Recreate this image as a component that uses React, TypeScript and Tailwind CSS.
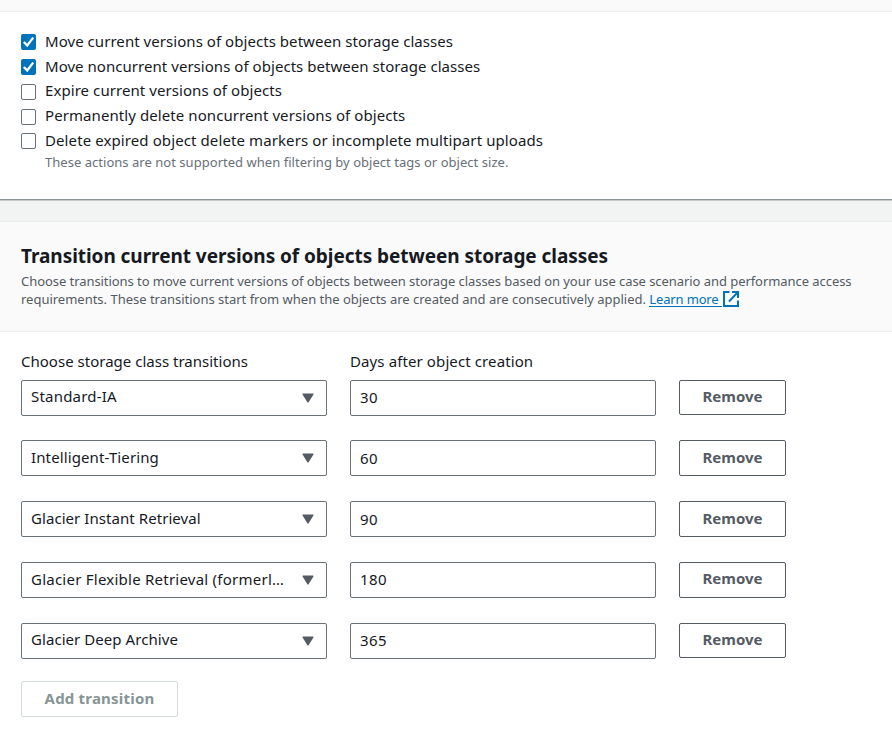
type Option = { label: string; checked: boolean; rowClass: string; boxClass: string; textClass: string };

const options: Option[] = [
  { label: "Move current versions of objects between storage classes", checked: true, rowClass: "h-[25px]", boxClass: "mt-[5px]", textClass: "tracking-[0.05px]" },
  { label: "Move noncurrent versions of objects between storage classes", checked: true, rowClass: "h-6", boxClass: "mt-[5px]", textClass: "tracking-[0.04px]" },
  { label: "Expire current versions of objects", checked: false, rowClass: "h-[25px]", boxClass: "mt-[6px]", textClass: "tracking-[0.07px]" },
  { label: "Permanently delete noncurrent versions of objects", checked: false, rowClass: "h-[25px]", boxClass: "mt-[6px]", textClass: "tracking-[0.08px]" },
  { label: "Delete expired object delete markers or incomplete multipart uploads", checked: false, rowClass: "h-[25px]", boxClass: "mt-[5px]", textClass: "tracking-[0.1px]" },
];

const transitions = [
  { storage: "Standard-IA", days: "30", rowClass: "h-[60px]", buttonClass: "h-[35px] pb-[2px]", selectClass: "pb-[3px] tracking-[0.2px]", daysClass: "pb-px" },
  { storage: "Intelligent-Tiering", days: "60", rowClass: "h-[61px]", buttonClass: "h-9 pb-[2px]", selectClass: "pb-px tracking-[0.12px]", daysClass: "pt-px" },
  { storage: "Glacier Instant Retrieval", days: "90", rowClass: "h-[61px]", buttonClass: "h-9 pb-[2px]", selectClass: "pb-px tracking-[0.06px]", daysClass: "pt-px" },
  { storage: "Glacier Flexible Retrieval (formerl…", days: "180", rowClass: "h-[61px]", buttonClass: "h-9 pb-[3px]", selectClass: "pb-px tracking-[0.24px]", daysClass: "pb-px" },
  { storage: "Glacier Deep Archive", days: "365", rowClass: "h-[58px]", buttonClass: "h-[35px] pb-[2px]", selectClass: "pb-[3px] tracking-[0.06px]", daysClass: "pb-px" },
];

function Checkbox({ checked, className }: { checked: boolean; className: string }) {
  return checked ? (
    <span className={`h-4 w-[15px] shrink-0 rounded-[2px] bg-[#0073bb] ${className}`}>
      <svg viewBox="0 0 15 16" className="block h-4 w-[15px]" fill="none" stroke="#fff" strokeWidth="2.3">
        <path d="M2.8 8 L6.2 11.4 L12.2 3.600" />
      </svg>
    </span>
  ) : (
    <span className={`h-4 w-[15px] shrink-0 rounded-[2px] border border-[#687078] bg-white ${className}`} />
  );
}

function ExternalIcon() {
  return (
    <svg viewBox="0 0 16 16" className="ml-px inline-block size-4 align-[-3px]" fill="none" stroke="#0073bb" strokeWidth="2">
      <path d="M6.500 1H1v14h14V9.500M9 1h6v6M15 1L6 10.500" />
    </svg>
  );
}

export default function App() {
  return (
    <div className="h-[732px] w-[892px] overflow-hidden bg-white font-['Noto_Sans',sans-serif] text-[15px] text-[#16191f]">
      <div className="h-3 border-b border-[#eaeded] bg-[#fafafa]" />
      <section className="h-[189px] border-b border-[#c5caca] pt-[17px]">
        <div className="h-full border-b border-[#879596] pl-[21px]">
          {options.map((o) => (
            <div key={o.label} className={`flex items-start gap-[9px] ${o.rowClass}`}>
              <Checkbox checked={o.checked} className={o.boxClass} />
              <span className={`text-[15px] leading-[25px] whitespace-nowrap ${o.textClass}`}>{o.label}</span>
            </div>
          ))}
          <p className="pl-6 text-[13px] leading-[18px] tracking-[0.03px] text-[#687078]">
            These actions are not supported when filtering by object tags or object size.
          </p>
        </div>
      </section>
      <div className="h-5 bg-[#f2f3f3]" />

      <header className="h-[111px] border-y border-[#eaeded] bg-[#fafafa] pt-[20px] pl-[21px] whitespace-nowrap">
        <h2 className="text-[19px] leading-[28px] font-bold tracking-[-0.05px]">
          Transition current versions of objects between storage classes
        </h2>
        <p className="mt-[2px] text-[13px] leading-[18px] tracking-[-0.06px] text-[#545b64]">
          Choose transitions to move current versions of objects between storage classes based on your use case scenario and performance access
          <br />
          <span className="tracking-[-0.01px]">
            requirements. These transitions start from when the objects are created and are consecutively applied.{" "}
          </span>
          <a className="text-[#0073bb]">
            <span className="inline-block h-[17px] border-b border-[#0073bb] pr-[3px] align-top tracking-[-0.15px]">Learn more</span>
            <ExternalIcon />
          </a>
        </p>
      </header>

      <main className="pt-[17px] pl-[21px] whitespace-nowrap">
        <div className="flex h-[31px] gap-[23px] leading-[25px]">
          <span className="w-[306px] tracking-[0.01px]">Choose storage class transitions</span>
          <span className="w-[306px] tracking-[0.11px]">Days after object creation</span>
        </div>
        {transitions.map((t) => (
          <div key={t.days} className={`flex items-start gap-[23px] ${t.rowClass}`}>
            <div className="flex h-9 w-[306px] items-center justify-between rounded-[2px] border border-[#687078] pr-3 pl-[9px]">
              <span className={t.selectClass}>{t.storage}</span>
              <svg viewBox="0 0 12 10" className="h-[10px] w-3 shrink-0" fill="#545b64">
                <path d="M1 0.5h10q.9 0 .4.9L6.8 9q-.8 1-1.6 0L.6 1.400Q.1.500 1 .5z" />
              </svg>
            </div>
            <div className="flex h-9 w-[306px] items-center rounded-[2px] border border-[#687078] pl-[9px]">
              <span className={`tracking-[0.4px] ${t.daysClass}`}>{t.days}</span>
            </div>
            <button className={`w-[107px] rounded-[2px] border border-[#545b64] font-bold text-[#545b64] ${t.buttonClass}`}>
              Remove
            </button>
          </div>
        ))}
        <button className="h-9 w-[157px] rounded-[2px] border border-[#d5dbdb] pb-px font-bold tracking-[0.2px] text-[#879596]">Add transition</button>
      </main>
    </div>
  );
}
